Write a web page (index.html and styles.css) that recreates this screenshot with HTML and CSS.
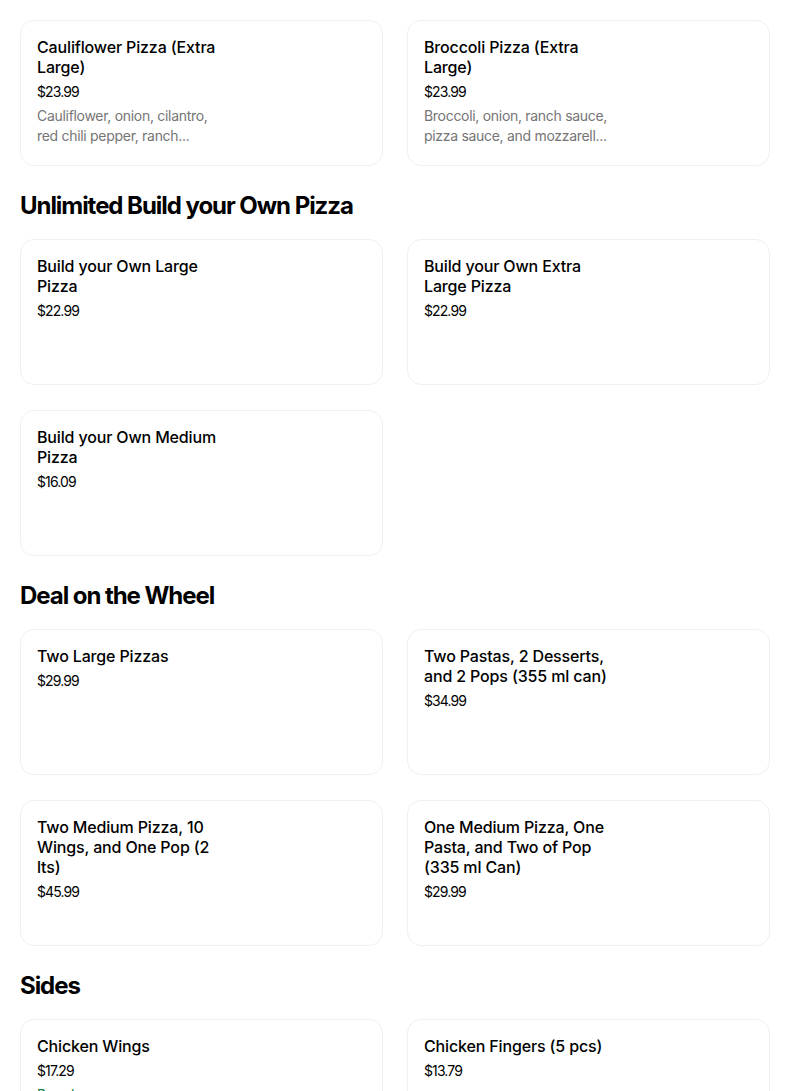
FILE: index.html
```html
<!DOCTYPE html>
<html lang="en">
<head>
<meta charset="utf-8">
<title>Menu</title>
<link rel="stylesheet" href="styles.css">
</head>
<body>
<main class="menu">
  <div class="grid first">
    <div class="card">
      <div class="info">
        <div class="title">Cauliflower Pizza (Extra Large)</div>
        <div class="price">$23.99</div>
        <div class="desc">Cauliflower, onion, cilantro, red chili pepper, ranch...</div>
      </div>
    </div>
    <div class="card">
      <div class="info">
        <div class="title">Broccoli Pizza (Extra Large)</div>
        <div class="price">$23.99</div>
        <div class="desc">Broccoli, onion, ranch sauce, pizza sauce, and mozzarell...</div>
      </div>
    </div>
  </div>

  <h2 class="section-title">Unlimited Build your Own Pizza</h2>
  <div class="grid">
    <div class="card">
      <div class="info">
        <div class="title">Build your Own Large Pizza</div>
        <div class="price">$22.99</div>
      </div>
    </div>
    <div class="card">
      <div class="info">
        <div class="title">Build your Own Extra Large Pizza</div>
        <div class="price">$22.99</div>
      </div>
    </div>
    <div class="card">
      <div class="info">
        <div class="title">Build your Own Medium Pizza</div>
        <div class="price">$16.09</div>
      </div>
    </div>
  </div>

  <h2 class="section-title">Deal on the Wheel</h2>
  <div class="grid">
    <div class="card">
      <div class="info">
        <div class="title">Two Large Pizzas</div>
        <div class="price">$29.99</div>
      </div>
    </div>
    <div class="card">
      <div class="info">
        <div class="title">Two Pastas, 2 Desserts, and 2 Pops (355 ml can)</div>
        <div class="price">$34.99</div>
      </div>
    </div>
    <div class="card">
      <div class="info">
        <div class="title">Two Medium Pizza, 10 Wings, and One Pop (2 lts)</div>
        <div class="price">$45.99</div>
      </div>
    </div>
    <div class="card">
      <div class="info">
        <div class="title">One Medium Pizza, One Pasta, and Two of Pop (335 ml Can)</div>
        <div class="price">$29.99</div>
      </div>
    </div>
  </div>

  <h2 class="section-title">Sides</h2>
  <div class="grid">
    <div class="card">
      <div class="info">
        <div class="title">Chicken Wings</div>
        <div class="price">$17.29</div>
        <div class="badge">Popular</div>
      </div>
    </div>
    <div class="card">
      <div class="info">
        <div class="title">Chicken Fingers (5 pcs)</div>
        <div class="price">$13.79</div>
      </div>
    </div>
  </div>
</main>
</body>
</html>
```

FILE: styles.css
```css
* { box-sizing: border-box; }
html, body { margin: 0; padding: 0; background: #fff; }
body {
  font-family: Inter, "Liberation Sans", sans-serif;
  color: #000;
}
.menu {
  width: 750px;
  margin-left: 20px;
  padding-top: 20px;
}
.grid {
  display: grid;
  grid-template-columns: 1fr 1fr;
  column-gap: 24px;
  row-gap: 25px;
}
.card {
  height: 146px;
  border: 1px solid #f0f0f0;
  border-radius: 14px;
  padding: 16px;
  overflow: hidden;
}
.info {
  width: 190px;
}
.title {
  font-size: 16px;
  line-height: 20px;
  font-weight: 500;
  letter-spacing: -0.15px;
}
.price {
  font-size: 14px;
  line-height: 20px;
  margin-top: 5px;
  letter-spacing: -0.9px;
}
.desc {
  margin-top: 4px;
  font-size: 14px;
  line-height: 20px;
  color: #757575;
  letter-spacing: -0.3px;
  display: -webkit-box;
  -webkit-line-clamp: 2;
  -webkit-box-orient: vertical;
  overflow: hidden;
}
.badge {
  margin-top: 4px;
  font-size: 14px;
  line-height: 20px;
  color: #0e8345;
}
.section-title {
  margin: 24px 0 17px;
  font-size: 24px;
  line-height: 32px;
  font-weight: 700;
  letter-spacing: -1.05px;
}
```
